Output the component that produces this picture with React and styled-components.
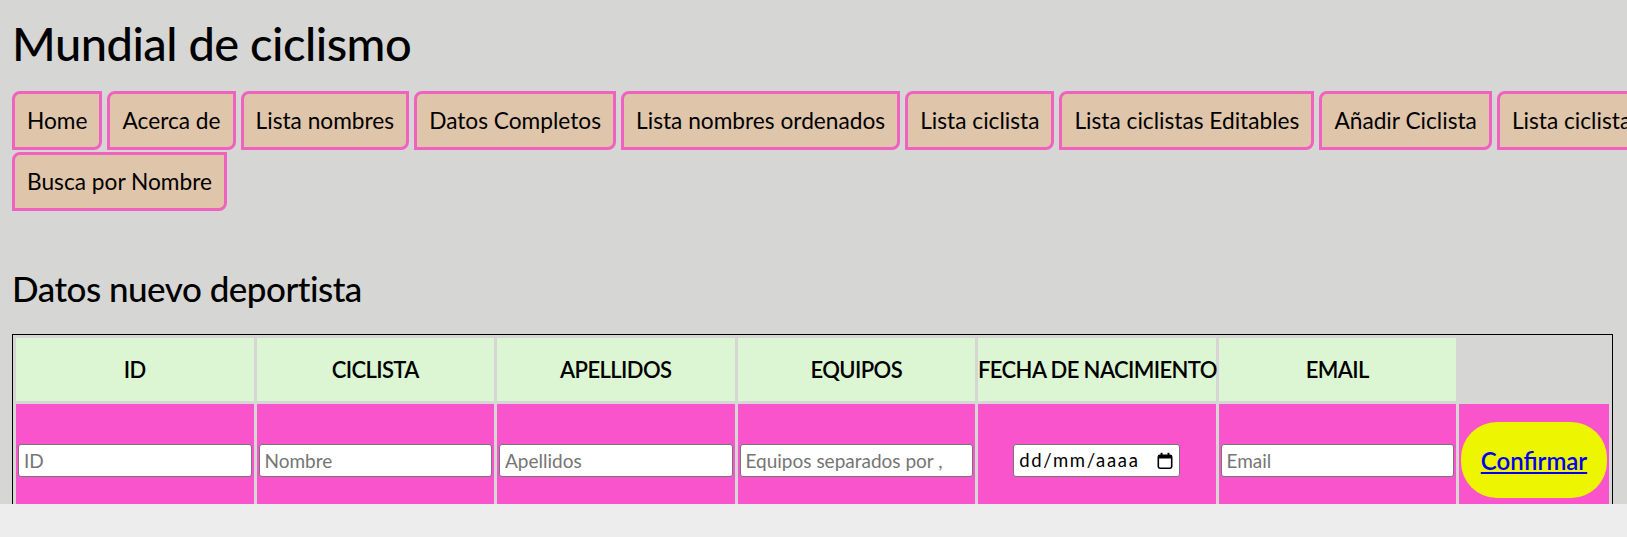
import React from 'react';
import styled, { createGlobalStyle } from 'styled-components';

const GlobalStyle = createGlobalStyle`
  html, body {
    margin: 0;
    padding: 0;
    background: #ededed;
  }
  body {
    font-family: Lato, 'Noto Sans', sans-serif;
    color: #000;
  }
`;

const Page = styled.div`
  box-sizing: border-box;
  height: 504px;
  overflow: hidden;
  background: #d6d6d4;
  padding: 0 14px 0 12px;
`;

const Title = styled.h1`
  margin: 15px 0 0;
  font-size: 47px;
  line-height: 56px;
  font-weight: 500;
  letter-spacing: -0.5px;
`;

const Nav = styled.nav`
  display: flex;
  flex-wrap: wrap;
  gap: 2px 5px;
  width: 1800px;
  margin-top: 20px;
`;

const NavButton = styled.button`
  font-family: inherit;
  font-size: 22.7px;
  line-height: 27px;
  color: #000;
  background: #dfc5aa;
  border: 3px solid #f062c0;
  border-radius: 8px 0 8px 0;
  padding: 13px 12px;
  white-space: nowrap;
  cursor: pointer;
`;

const Subtitle = styled.h2`
  margin: 56px 0 25px;
  font-size: 35px;
  line-height: 42px;
  font-weight: 500;
  letter-spacing: -0.5px;
`;

const Table = styled.table`
  width: 100%;
  table-layout: fixed;
  border: 1px solid #000;
  border-spacing: 3px;
`;

const HeadCell = styled.th`
  height: 63px;
  padding: 0;
  background: #dcf6d3;
  font-size: 22px;
  font-weight: 600;
  text-transform: uppercase;
  white-space: nowrap;
  letter-spacing: -0.6px;
`;

const Cell = styled.td`
  height: 108px;
  padding: 2px;
  background: #f954cc;
  text-align: center;
  vertical-align: middle;
`;

const TextInput = styled.input`
  box-sizing: border-box;
  width: 100%;
  height: 33px;
  padding: 0 5px;
  font-family: inherit;
  font-size: 19px;
  border: 1px solid #767676;
  border-radius: 3px;
  background: #fff;

  &::placeholder {
    color: #757575;
  }
`;

const DateBox = styled.label`
  box-sizing: border-box;
  display: inline-flex;
  align-items: center;
  gap: 4px;
  width: 167px;
  height: 33px;
  padding: 0 6px 0 5px;
  border: 1px solid #767676;
  border-radius: 3px;
  background: #fff;
`;

const DateInput = styled.input`
  flex: 1;
  min-width: 0;
  border: 0;
  padding: 0;
  outline: none;
  font-family: inherit;
  font-size: 18.5px;
  letter-spacing: 1.7px;
  background: transparent;

  &::placeholder {
    color: #000;
  }
`;

const ConfirmButton = styled.button`
  width: 146px;
  height: 76px;
  border: 0;
  border-radius: 36px;
  background: #eef500;
  font-family: inherit;
  cursor: pointer;

  a {
    color: #0000ee;
    font-size: 24px;
    font-weight: 600;
    text-decoration: underline;
  }
`;

const links = [
  'Home',
  'Acerca de',
  'Lista nombres',
  'Datos Completos',
  'Lista nombres ordenados',
  'Lista ciclista',
  'Lista ciclistas Editables',
  'Añadir Ciclista',
  'Lista ciclistas por Equipo',
  'Busca por Nombre',
];

const columns = ['ID', 'Ciclista', 'Apellidos', 'Equipos', 'Fecha de nacimiento', 'Email'];

const CalendarIcon = () => (
  <svg width="16" height="17" viewBox="0 0 16 17">
    <rect x="1.3" y="3.3" width="13.4" height="12.9" rx="1.6" fill="none" stroke="#000" strokeWidth="1.6" />
    <rect x="1.3" y="3.3" width="13.4" height="3.2" fill="#000" />
    <rect x="3.6" y="0.8" width="1.9" height="3.4" fill="#000" />
    <rect x="10.5" y="0.8" width="1.9" height="3.4" fill="#000" />
  </svg>
);

export default function App() {
  return (
    <>
      <GlobalStyle />
      <Page>
        <Title>Mundial de ciclismo</Title>
        <Nav>
          {links.map((l) => (
            <NavButton key={l}>{l}</NavButton>
          ))}
        </Nav>

        <Subtitle>Datos nuevo deportista</Subtitle>
        <Table>
          <colgroup>
            {columns.map((c) => (
              <col key={c} />
            ))}
            <col style={{ width: 150 }} />
          </colgroup>
          <thead>
            <tr>
              {columns.map((c) => (
                <HeadCell key={c}>{c}</HeadCell>
              ))}
            </tr>
          </thead>
          <tbody>
            <tr>
              <Cell><TextInput placeholder="ID" /></Cell>
              <Cell><TextInput placeholder="Nombre" /></Cell>
              <Cell><TextInput placeholder="Apellidos" /></Cell>
              <Cell><TextInput placeholder="Equipos separados por ," /></Cell>
              <Cell>
                <DateBox>
                  <DateInput placeholder="dd/mm/aaaa" />
                  <CalendarIcon />
                </DateBox>
              </Cell>
              <Cell><TextInput placeholder="Email" /></Cell>
              <Cell>
                <ConfirmButton>
                  <a href="#">Confirmar</a>
                </ConfirmButton>
              </Cell>
            </tr>
          </tbody>
        </Table>
      </Page>
    </>
  );
}
